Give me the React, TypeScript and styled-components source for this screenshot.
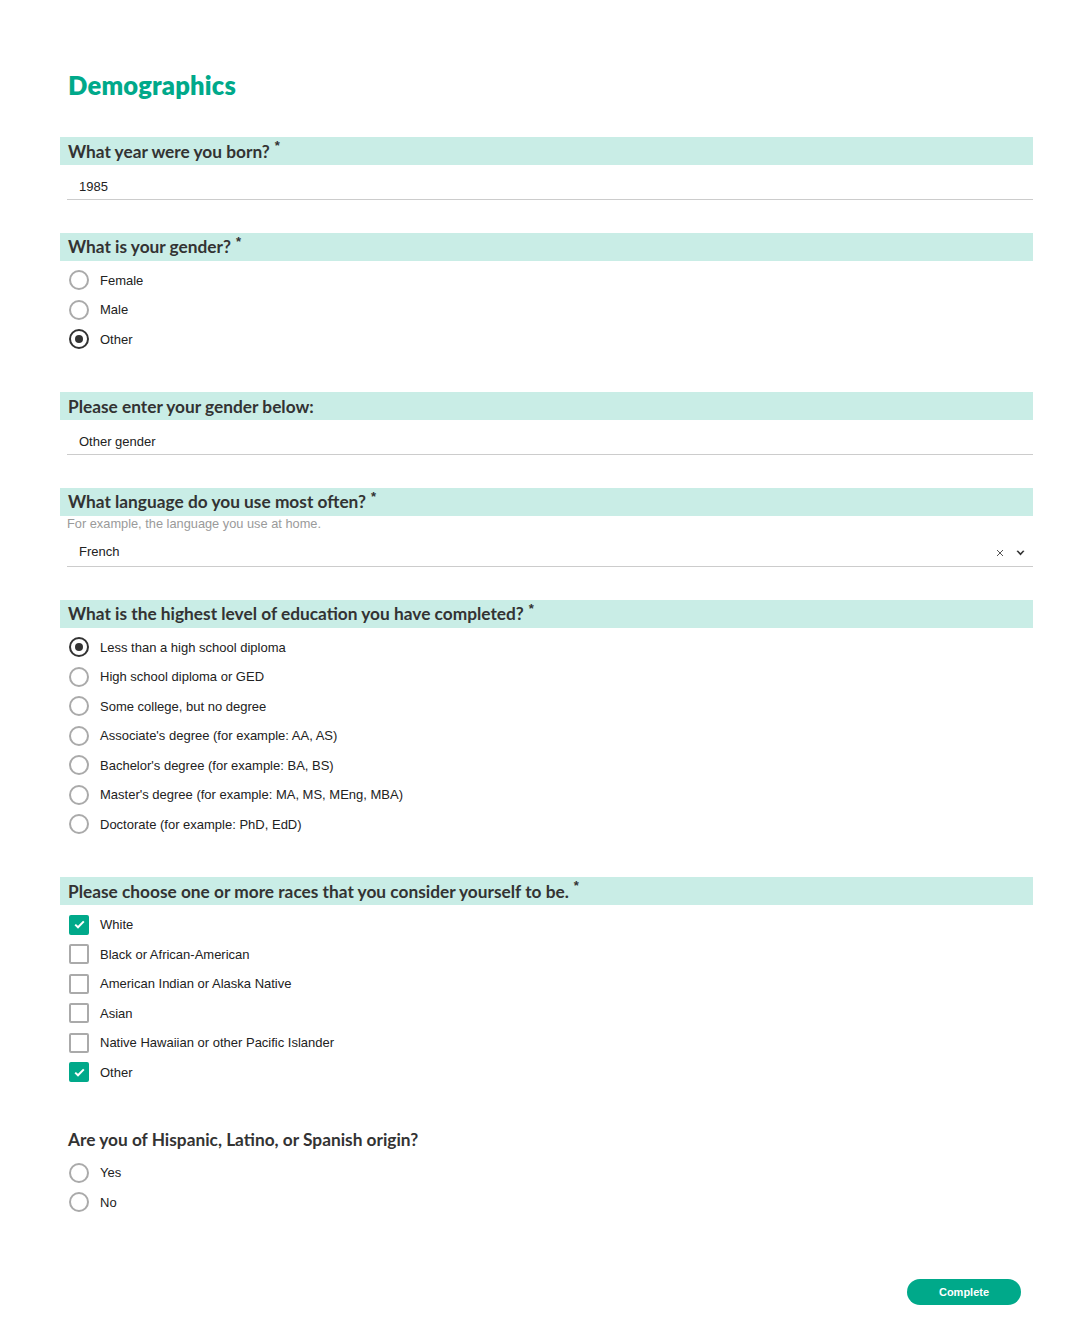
import React, { useState } from 'react'
import styled, { createGlobalStyle } from 'styled-components'

const GlobalStyle = createGlobalStyle`
  html, body {
    margin: 0;
    padding: 0;
    background: #ffffff;
  }
  body {
    font-family: 'Liberation Sans', Arial, sans-serif;
    color: #222222;
  }
`

const Page = styled.div`
  width: 973px;
  padding: 71px 0 19px 60px;
`

const Title = styled.h1`
  margin: 0 0 38px 8px;
  font-family: 'Lato', 'Open Sans', sans-serif;
  font-weight: 800;
  font-size: 25.5px;
  letter-spacing: 0.2px;
  line-height: 28px;
  color: #00a98a;
`

const Section = styled.section`
  margin-bottom: 33px;
`

const Question = styled.div<{ $plain?: boolean }>`
  height: 28px;
  display: flex;
  align-items: center;
  padding-left: 8px;
  background: ${({ $plain }) => ($plain ? 'transparent' : '#c9ede6')};
  font-family: 'Lato', 'Open Sans', sans-serif;
  font-weight: 700;
  font-size: 17.3px;
  color: #333333;
`

const Required = styled.span`
  font-family: 'Liberation Sans', Arial, sans-serif;
  font-weight: 700;
  font-size: 13px;
  margin-left: 5px;
  align-self: flex-start;
  margin-top: 1px;
`

const Description = styled.div`
  height: 14px;
  padding-left: 7px;
  font-size: 12.8px;
  line-height: 15px;
  color: #9a9a9a;
`

const Field = styled.div<{ $padBottom?: number }>`
  display: flex;
  align-items: center;
  margin-left: 7px;
  padding: 14px 8px ${({ $padBottom }) => $padBottom ?? 4.5}px 12px;
  border-bottom: 1px solid #cccccc;
  font-size: 13px;
  line-height: 15px;
  color: #222222;
`

const FieldValue = styled.span`
  flex: 1;
`

const SelectIcons = styled.span`
  display: flex;
  align-items: center;
  gap: 12px;
  margin-top: 4px;
`

const OptionList = styled.div`
  padding: 5px 0 5px;
`

const Option = styled.label`
  height: 29.5px;
  display: flex;
  align-items: center;
  padding-left: 9px;
  font-size: 13px;
  color: #222222;
  cursor: pointer;
`

const RadioMark = styled.span<{ $on: boolean }>`
  box-sizing: border-box;
  width: 20px;
  height: 20px;
  border-radius: 50%;
  border: 2px solid ${({ $on }) => ($on ? '#333333' : '#aaaaaa')};
  display: flex;
  align-items: center;
  justify-content: center;
  margin-right: 11px;
  &::after {
    content: '';
    width: 8px;
    height: 8px;
    border-radius: 50%;
    background: #333333;
    display: ${({ $on }) => ($on ? 'block' : 'none')};
  }
`

const CheckMark = styled.span<{ $on: boolean }>`
  box-sizing: border-box;
  width: 20px;
  height: 20px;
  border-radius: 2px;
  border: 2px solid ${({ $on }) => ($on ? '#00a98a' : '#aaaaaa')};
  background: ${({ $on }) => ($on ? '#00a98a' : '#ffffff')};
  display: flex;
  align-items: center;
  justify-content: center;
  margin-right: 11px;
`

const Footer = styled.div`
  display: flex;
  justify-content: flex-end;
  padding-right: 12px;
  margin-top: 57px;
`

const CompleteButton = styled.button`
  width: 114px;
  height: 26px;
  border: none;
  border-radius: 13px;
  background: #00a98a;
  color: #ffffff;
  font-family: 'Liberation Sans', Arial, sans-serif;
  font-weight: 700;
  font-size: 11px;
  cursor: pointer;
`

const genders = ['Female', 'Male', 'Other']
const education = [
  'Less than a high school diploma',
  'High school diploma or GED',
  'Some college, but no degree',
  "Associate's degree (for example: AA, AS)",
  "Bachelor's degree (for example: BA, BS)",
  "Master's degree (for example: MA, MS, MEng, MBA)",
  'Doctorate (for example: PhD, EdD)',
]
const races = [
  'White',
  'Black or African-American',
  'American Indian or Alaska Native',
  'Asian',
  'Native Hawaiian or other Pacific Islander',
  'Other',
]

function QuestionTitle({ text, required, plain }: { text: string; required?: boolean; plain?: boolean }) {
  return (
    <Question $plain={plain}>
      {text}
      {required && <Required>*</Required>}
    </Question>
  )
}

function RadioGroup({ options, value, onChange }: { options: string[]; value: string; onChange: (v: string) => void }) {
  return (
    <OptionList>
      {options.map((option) => (
        <Option key={option} onClick={() => onChange(option)}>
          <RadioMark $on={option === value} />
          {option}
        </Option>
      ))}
    </OptionList>
  )
}

export default function App() {
  const [gender, setGender] = useState('Other')
  const [level, setLevel] = useState(education[0])
  const [checked, setChecked] = useState<string[]>(['White', 'Other'])
  const [hispanic, setHispanic] = useState('')

  const toggleRace = (race: string) => {
    setChecked((prev) => (prev.includes(race) ? prev.filter((r) => r !== race) : [...prev, race]))
  }

  return (
    <Page>
      <GlobalStyle />
      <Title>Demographics</Title>

      <Section>
        <QuestionTitle text="What year were you born?" required />
        <Field>1985</Field>
      </Section>

      <Section>
        <QuestionTitle text="What is your gender?" required />
        <RadioGroup options={genders} value={gender} onChange={setGender} />
      </Section>

      <Section>
        <QuestionTitle text="Please enter your gender below:" />
        <Field>Other gender</Field>
      </Section>

      <Section>
        <QuestionTitle text="What language do you use most often?" required />
        <Description>For example, the language you use at home.</Description>
        <Field $padBottom={7}>
          <FieldValue>French</FieldValue>
          <SelectIcons>
            <svg width="8" height="8" viewBox="0 0 8 8">
              <path d="M1 1 L7 7 M7 1 L1 7" stroke="#555" strokeWidth="1" />
            </svg>
            <svg width="9" height="7" viewBox="0 0 9 7">
              <path d="M0.5 1 L4.5 5.5 L8.5 1 L7 0.5 L4.5 3 L2 0.5 Z" fill="#333" />
            </svg>
          </SelectIcons>
        </Field>
      </Section>

      <Section>
        <QuestionTitle text="What is the highest level of education you have completed?" required />
        <RadioGroup options={education} value={level} onChange={setLevel} />
      </Section>

      <Section>
        <QuestionTitle text="Please choose one or more races that you consider yourself to be." required />
        <OptionList>
          {races.map((race) => {
            const on = checked.includes(race)
            return (
              <Option key={race} onClick={() => toggleRace(race)}>
                <CheckMark $on={on}>
                  {on && (
                    <svg width="11" height="9" viewBox="0 0 11 9">
                      <path d="M1.2 4.6 L4 7.3 L9.8 1.4" stroke="#fff" strokeWidth="2" fill="none" />
                    </svg>
                  )}
                </CheckMark>
                {race}
              </Option>
            )
          })}
        </OptionList>
      </Section>

      <Section>
        <QuestionTitle text="Are you of Hispanic, Latino, or Spanish origin?" plain />
        <RadioGroup options={['Yes', 'No']} value={hispanic} onChange={setHispanic} />
      </Section>

      <Footer>
        <CompleteButton>Complete</CompleteButton>
      </Footer>
    </Page>
  )
}
